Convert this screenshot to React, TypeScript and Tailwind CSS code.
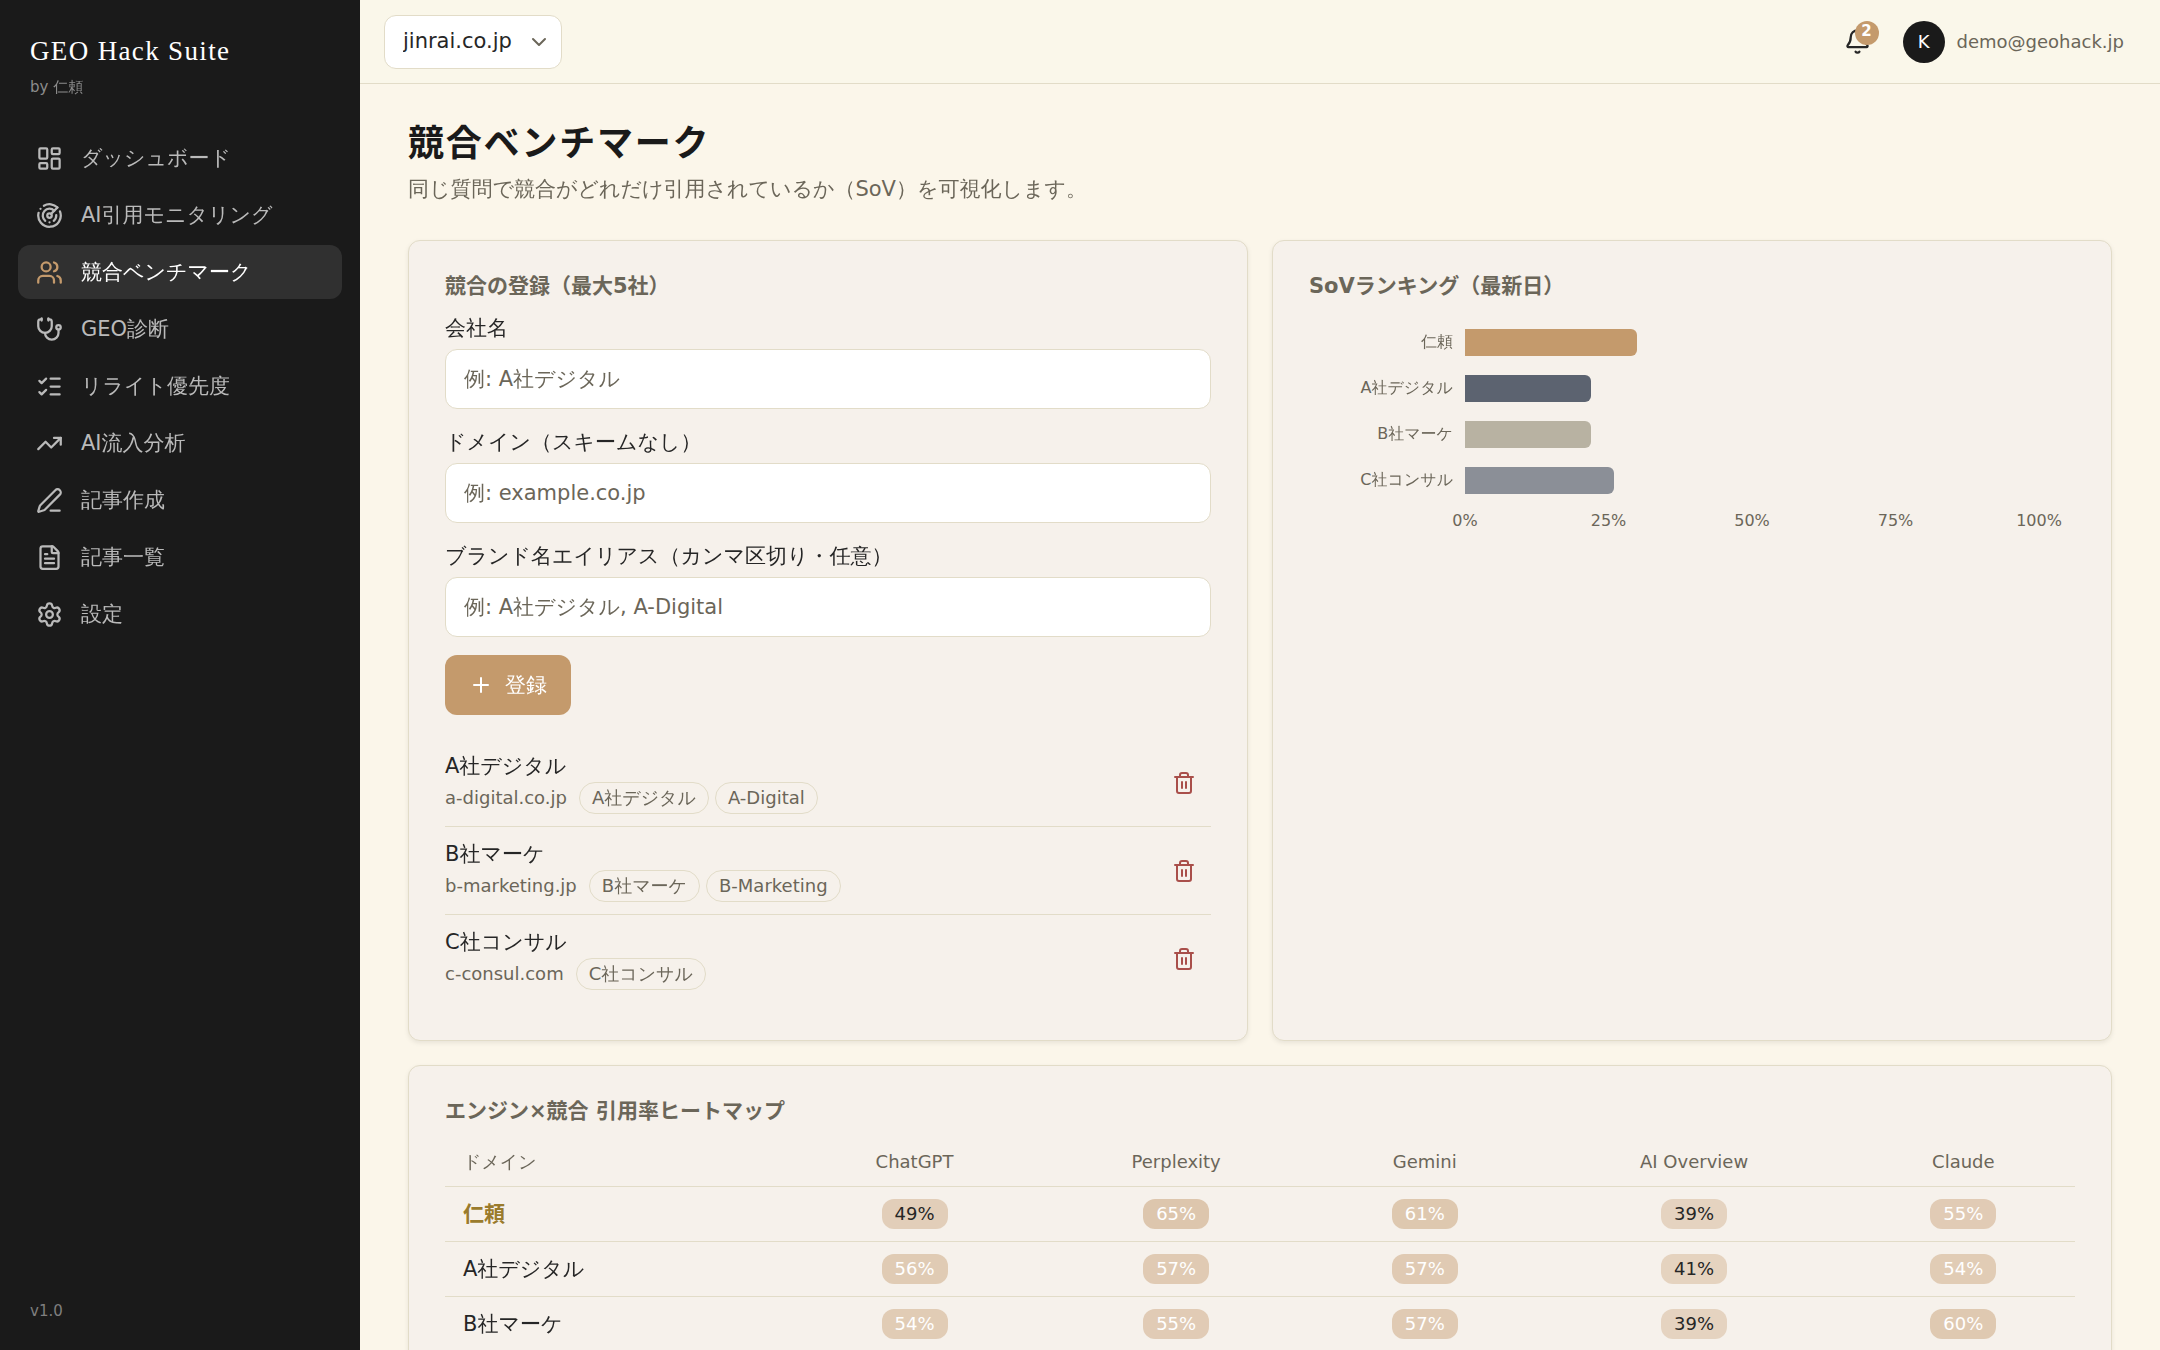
import React from "react";
import {
  Bell,
  ChevronDown,
  FileText,
  LayoutDashboard,
  ListChecks,
  LucideIcon,
  PenLine,
  Plus,
  Radar,
  Settings,
  Stethoscope,
  Trash2,
  TrendingUp,
  Users,
} from "lucide-react";
import clsx from "clsx";

type NavItem = { label: string; icon: LucideIcon; href: string };

type Competitor = {
  id: string;
  name: string;
  domain: string;
  aliases: string[];
};

const NAV_ITEMS: NavItem[] = [
  { label: "ダッシュボード", icon: LayoutDashboard, href: "#dashboard" },
  { label: "AI引用モニタリング", icon: Radar, href: "#monitoring" },
  { label: "競合ベンチマーク", icon: Users, href: "#benchmark" },
  { label: "GEO診断", icon: Stethoscope, href: "#diagnosis" },
  { label: "リライト優先度", icon: ListChecks, href: "#rewrite" },
  { label: "AI流入分析", icon: TrendingUp, href: "#traffic" },
  { label: "記事作成", icon: PenLine, href: "#compose" },
  { label: "記事一覧", icon: FileText, href: "#articles" },
  { label: "設定", icon: Settings, href: "#settings" },
];

const FIELDS = [
  { id: "name", label: "会社名", placeholder: "例: A社デジタル" },
  { id: "domain", label: "ドメイン（スキームなし）", placeholder: "例: example.co.jp" },
  {
    id: "aliases",
    label: "ブランド名エイリアス（カンマ区切り・任意）",
    placeholder: "例: A社デジタル, A-Digital",
  },
];

const INITIAL_COMPETITORS: Competitor[] = [
  { id: "a", name: "A社デジタル", domain: "a-digital.co.jp", aliases: ["A社デジタル", "A-Digital"] },
  { id: "b", name: "B社マーケ", domain: "b-marketing.jp", aliases: ["B社マーケ", "B-Marketing"] },
  { id: "c", name: "C社コンサル", domain: "c-consul.com", aliases: ["C社コンサル"] },
];

const RANKING = [
  { name: "仁頼", value: 30, color: "bg-[#c49a6c]" },
  { name: "A社デジタル", value: 22, color: "bg-[#5c6370]" },
  { name: "B社マーケ", value: 22, color: "bg-[#b8b2a2]" },
  { name: "C社コンサル", value: 26, color: "bg-[#8b8f97]" },
];

const TICKS = [0, 25, 50, 75, 100];

const ENGINES = ["ChatGPT", "Perplexity", "Gemini", "AI Overview", "Claude"];

const HEATMAP = [
  { name: "仁頼", own: true, rates: [49, 65, 61, 39, 55] },
  { name: "A社デジタル", own: false, rates: [56, 57, 57, 41, 54] },
  { name: "B社マーケ", own: false, rates: [54, 55, 57, 39, 60] },
  { name: "C社コンサル", own: false, rates: [57, 59, 56, 42, 55] },
];

function Sidebar() {
  return (
    <aside className="flex w-[360px] shrink-0 flex-col bg-[#1a1a1a]">
      <div className="px-[30px] pt-[30px]">
        <div className="font-['Liberation_Serif','Noto_Sans_CJK_JP',serif] text-[27px] leading-[42px] tracking-wider text-white">
          GEO Hack Suite
        </div>
        <div className="mt-[3px] text-[15px] leading-6 text-[#8c8c8c]">by 仁頼</div>
      </div>
      <nav className="mt-8 flex flex-1 flex-col gap-[3px] px-[18px]">
        {NAV_ITEMS.map(({ label, icon: Icon, href }) => {
          const active = href === "#benchmark";
          return (
            <a
              key={href}
              href={href}
              aria-current={active ? "page" : undefined}
              className={clsx(
                "flex items-center gap-[18px] rounded-xl px-[18px] py-3 text-[21px] leading-[30px]",
                active ? "bg-[#303030] text-white" : "text-[#bababa]"
              )}
            >
              <Icon size={27} className={clsx("shrink-0", active && "text-[#c49a6c]")} />
              {label}
            </a>
          );
        })}
      </nav>
      <div className="px-[30px] pb-[27px] text-[15px] leading-6 text-[#7f7f7f]">v1.0</div>
    </aside>
  );
}

function Header() {
  return (
    <header className="flex h-[84px] shrink-0 items-center justify-between border-b border-[#e2dcc8] bg-[#faf7ea] pr-9 pl-6">
      <div className="relative">
        <select
          aria-label="サイト"
          className="h-[54px] w-[178px] appearance-none rounded-xl border border-[#e2dcc8] bg-white pl-[18px] text-[21px]"
        >
          <option>jinrai.co.jp</option>
        </select>
        <ChevronDown
          size={24}
          className="pointer-events-none absolute top-[15px] right-[11px] text-[#6b6659]"
        />
      </div>
      <div className="flex items-center gap-[18px]">
        <button
          aria-label="通知"
          className="relative flex size-[54px] items-center justify-center"
        >
          <Bell size={27} />
          <span className="absolute top-[6px] right-[6px] size-6 rounded-full bg-[#c49a6c] text-center text-[15px] leading-5 font-bold text-white">
            2
          </span>
        </button>
        <div className="flex items-center gap-3 text-lg leading-6">
          <span className="flex size-[42px] items-center justify-center rounded-full bg-[#1a1a1a] text-white">
            K
          </span>
          <span className="text-[#6b6659]">demo@geohack.jp</span>
        </div>
      </div>
    </header>
  );
}

function Card({ title, children }: { title: string; children: React.ReactNode }) {
  return (
    <section className="rounded-xl border border-[#e2dcc8] bg-[#f6f1eb] px-9 pt-[30px] pb-[38px] shadow-[0_2px_5px_rgba(0,0,0,0.08)]">
      <h2 className="mb-3 font-['DejaVu_Sans','Noto_Sans_CJK_JP',sans-serif] text-[21px] leading-[30px] font-bold text-[#6b6659]">
        {title}
      </h2>
      {children}
    </section>
  );
}

function CompetitorForm() {
  const [competitors, setCompetitors] = React.useState(INITIAL_COMPETITORS);

  const handleSubmit = (e: React.FormEvent<HTMLFormElement>) => {
    e.preventDefault();
    const data = new FormData(e.currentTarget);
    const name = String(data.get("name") || "");
    if (!name || competitors.length >= 5) return;
    setCompetitors([
      ...competitors,
      {
        id: String(Date.now()),
        name,
        domain: String(data.get("domain") || ""),
        aliases: String(data.get("aliases") || "")
          .split(",")
          .map((s) => s.trim())
          .filter(Boolean),
      },
    ]);
    e.currentTarget.reset();
  };

  return (
    <Card title="競合の登録（最大5社）">
      <form className="flex flex-col items-start gap-[18px]" onSubmit={handleSubmit}>
        {FIELDS.map((field) => (
          <div key={field.id} className="flex w-full flex-col gap-[6px]">
            <label htmlFor={field.id} className="text-[21px] leading-[30px]">
              {field.label}
            </label>
            <input
              id={field.id}
              name={field.id}
              placeholder={field.placeholder}
              className="h-[60px] w-full rounded-xl border border-[#e2dcc8] bg-white px-[18px] text-[21px] placeholder:text-[#6b6659]"
            />
          </div>
        ))}
        <button
          type="submit"
          className="flex h-[60px] items-center gap-3 rounded-xl bg-[#c49a6c] px-6 text-[21px] leading-[30px] text-white"
        >
          <Plus size={24} />
          登録
        </button>
      </form>
      <ul className="mt-6 divide-y divide-[#e2dcc8]">
        {competitors.map((c) => (
          <li key={c.id} className="flex items-center justify-between py-3">
            <div>
              <div className="text-[21px] leading-[30px]">{c.name}</div>
              <div className="mt-px flex items-center gap-[6px] text-lg leading-6 text-[#6b6659]">
                <span className="mr-[6px]">{c.domain}</span>
                {c.aliases.map((alias) => (
                  <span key={alias} className="rounded-full border border-[#e2dcc8] px-3 py-[3px]">
                    {alias}
                  </span>
                ))}
              </div>
            </div>
            <button
              aria-label={`${c.name}を削除`}
              className="flex size-[54px] items-center justify-center text-[#a94f4a]"
              onClick={() => setCompetitors(competitors.filter((x) => x.id !== c.id))}
            >
              <Trash2 size={24} />
            </button>
          </li>
        ))}
      </ul>
    </Card>
  );
}

function RankingChart() {
  return (
    <Card title="SoVランキング（最新日）">
      <div className="pt-[6px] pr-9 text-base leading-6 text-[#6b6659]">
        {RANKING.map((row) => (
          <div key={row.name} className="flex h-[46px] items-center gap-3">
            <div className="w-36 shrink-0 text-right">{row.name}</div>
            <div className="flex-1">
              <div
                className={clsx("h-[27px] rounded-r-md", row.color)}
                style={{ width: `${row.value}%` }}
              />
            </div>
          </div>
        ))}
        <div className="mt-[6px] ml-[156px] flex justify-between">
          {TICKS.map((tick) => (
            <div key={tick} className="flex w-0 justify-center">
              <span>{tick}%</span>
            </div>
          ))}
        </div>
      </div>
    </Card>
  );
}

function Heatmap() {
  return (
    <Card title="エンジン×競合 引用率ヒートマップ">
      <table className="w-full">
        <thead>
          <tr className="border-b border-[#e2dcc8] text-lg leading-6 text-[#6b6659]">
            <th className="px-[18px] py-3 text-left font-normal">ドメイン</th>
            {ENGINES.map((engine) => (
              <th key={engine} className="px-[18px] py-3 text-center font-normal">
                {engine}
              </th>
            ))}
          </tr>
        </thead>
        <tbody>
          {HEATMAP.map((row) => (
            <tr key={row.name} className="border-b border-[#e2dcc8]">
              <td
                className={clsx(
                  "px-[18px] py-3 text-[21px] leading-[30px]",
                  row.own &&
                    "font-['DejaVu_Sans','Noto_Sans_CJK_JP',sans-serif] font-bold text-[#9a7b2c]"
                )}
              >
                {row.name}
              </td>
              {row.rates.map((rate, i) => (
                <td key={ENGINES[i]} className="px-[18px] py-3 text-center text-lg leading-6">
                  <span
                    className={clsx(
                      "inline-block rounded-xl px-[13px] py-[3px] align-middle",
                      rate >= 50 && "text-white"
                    )}
                    style={{ backgroundColor: `rgba(196, 154, 108, ${0.1 + rate * 0.006})` }}
                  >
                    {rate}%
                  </span>
                </td>
              ))}
            </tr>
          ))}
        </tbody>
      </table>
    </Card>
  );
}

function App() {
  return (
    <div
      lang="ja"
      className="flex h-screen bg-[#fbf6ea] font-['DejaVu_Sans','WenQuanYi_Zen_Hei','Noto_Sans_CJK_JP',sans-serif] text-[#262626]"
    >
      <Sidebar />
      <div className="flex min-w-0 flex-1 flex-col">
        <Header />
        <main className="flex-1 overflow-y-auto px-12 py-9 [scrollbar-width:none]">
          <h1 className="font-['DejaVu_Sans','Noto_Sans_CJK_JP',sans-serif] text-4xl leading-[48px] font-bold tracking-wider text-[#1a1a1a]">
            競合ベンチマーク
          </h1>
          <p className="mt-[6px] text-[21px] leading-[30px] text-[#6b6659]">
            同じ質問で競合がどれだけ引用されているか（SoV）を可視化します。
          </p>
          <div className="mt-9 mb-6 grid grid-cols-2 gap-6">
            <CompetitorForm />
            <RankingChart />
          </div>
          <Heatmap />
        </main>
      </div>
    </div>
  );
}

export default App;
